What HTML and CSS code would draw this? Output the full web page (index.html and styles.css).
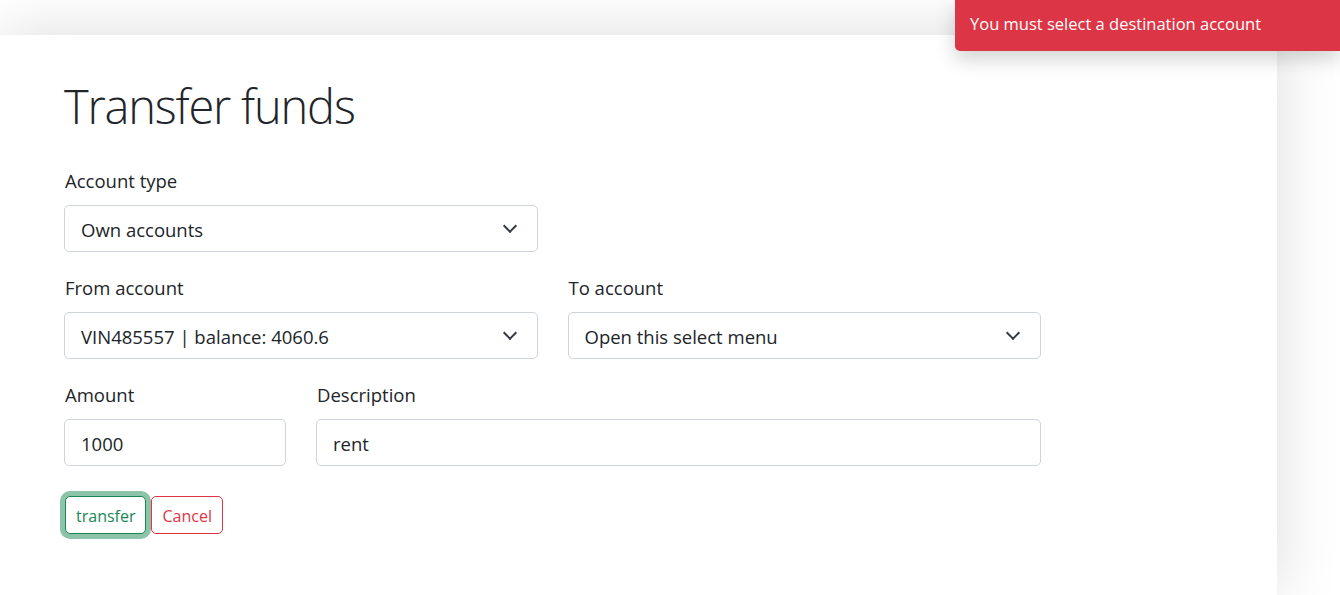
FILE: index.html
```html
<!DOCTYPE html>
<html lang="en">
<head>
    <meta charset="UTF-8">
    <meta name="viewport" content="width=device-width, initial-scale=1.0">
    <title>Transfer funds</title>
    <link rel="stylesheet" href="styles.css">
</head>
<body>
    <div class="toast">You must select a destination account</div>

    <main class="page">
        <h1 class="title">Transfer funds</h1>
        <form class="transfer-form">
            <div class="row">
                <div class="field col-6">
                    <label>Account type</label>
                    <div class="select">Own accounts</div>
                </div>
            </div>
            <div class="row">
                <div class="field col-6">
                    <label>From account</label>
                    <div class="select">VIN485557 | balance: 4060.6</div>
                </div>
                <div class="field col-6">
                    <label>To account</label>
                    <div class="select">Open this select menu</div>
                </div>
            </div>
            <div class="row">
                <div class="field col-3">
                    <label>Amount</label>
                    <div class="input">1000</div>
                </div>
                <div class="field col-9">
                    <label>Description</label>
                    <div class="input">rent</div>
                </div>
            </div>
            <div class="actions">
                <button type="button" class="btn btn-success focused">transfer</button>
                <button type="button" class="btn btn-danger">Cancel</button>
            </div>
        </form>
    </main>
</body>
</html>
```

FILE: styles.css
```css
body {
    margin: 0;
    background: #fff;
    font-family: "Open Sans", "Noto Sans", sans-serif;
    color: #212529;
    overflow: hidden;
}
.page {
    margin-top: 35px;
    width: 1277px;
    height: 560px;
    background: #fff;
    box-shadow: 0 0 60px rgba(0, 0, 0, 0.14);
    padding: 0 0 0 64px;
    box-sizing: border-box;
    overflow: hidden;
}
.title {
    margin: 0;
    padding-top: 41px;
    height: 89px;
    font-size: 47px;
    font-weight: 300;
    line-height: 60px;
    letter-spacing: -1.2px;
    color: #212529;
}
.transfer-form {
    width: 977px;
}
.row {
    display: flex;
    gap: 30px;
    margin-bottom: 20px;
}
.col-6 { width: 473.5px; }
.col-3 { width: 222px; }
.col-9 { width: 725px; }
.field label {
    display: block;
    font-size: 18.5px;
    line-height: 30px;
    padding: 1px 0 0 1px;
    margin-bottom: 9px;
}
.select, .input {
    box-sizing: border-box;
    height: 47px;
    border: 1px solid #ced4da;
    border-radius: 5px;
    padding: 2px 15px 0 16px;
    font-size: 18.5px;
    line-height: 43px;
    color: #212529;
}
.select {
    position: relative;
}
.select::after {
    content: "";
    position: absolute;
    right: 22px;
    top: 15px;
    width: 8px;
    height: 8px;
    border-right: 2px solid #343a40;
    border-bottom: 2px solid #343a40;
    transform: rotate(45deg);
}
.actions {
    display: flex;
    gap: 5px;
    padding-top: 10px;
    padding-left: 1px;
}
.btn {
    height: 38px;
    padding: 2px 10px 0;
    font-family: inherit;
    font-size: 16px;
    background: #fff;
    border-radius: 5px;
    cursor: pointer;
}
.btn-success {
    color: #198754;
    border: 1px solid #198754;
}
.btn-danger {
    color: #dc3545;
    border: 1px solid #dc3545;
}
.focused {
    box-shadow: 0 0 0 5px rgba(25, 135, 84, 0.5);
}
.toast {
    position: absolute;
    top: 0;
    right: 0;
    width: 385px;
    height: 51px;
    box-sizing: border-box;
    padding: 0 15px;
    background: #dc3545;
    color: #fff;
    font-size: 16.5px;
    line-height: 47px;
    border-bottom-left-radius: 5px;
    box-shadow: 0 8px 20px rgba(0, 0, 0, 0.18);
    z-index: 2;
}
```
